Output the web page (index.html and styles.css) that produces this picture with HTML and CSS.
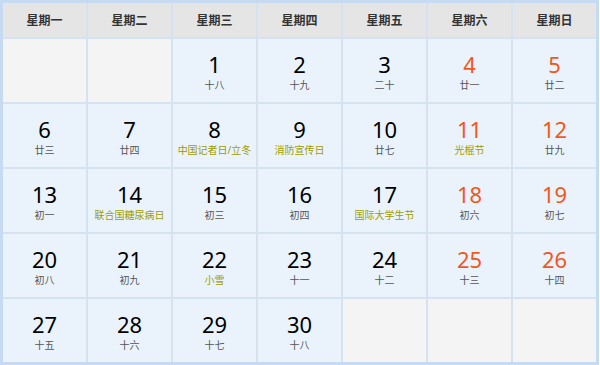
FILE: index.html
```html
<!DOCTYPE html>
<html lang="zh-CN">
<head>
<meta charset="utf-8">
<title>日历</title>
<link rel="stylesheet" href="styles.css">
</head>
<body>
<div class="cal">
  <div class="head">星期一</div>
  <div class="head">星期二</div>
  <div class="head">星期三</div>
  <div class="head">星期四</div>
  <div class="head">星期五</div>
  <div class="head">星期六</div>
  <div class="head">星期日</div>

  <div class="cell empty"></div>
  <div class="cell empty"></div>
  <div class="cell"><span class="num">1</span><span class="sub">十八</span></div>
  <div class="cell"><span class="num">2</span><span class="sub">十九</span></div>
  <div class="cell"><span class="num">3</span><span class="sub">二十</span></div>
  <div class="cell"><span class="num wk">4</span><span class="sub">廿一</span></div>
  <div class="cell"><span class="num wk">5</span><span class="sub">廿二</span></div>

  <div class="cell"><span class="num">6</span><span class="sub">廿三</span></div>
  <div class="cell"><span class="num">7</span><span class="sub">廿四</span></div>
  <div class="cell"><span class="num">8</span><span class="sub fest">中国记者日/立冬</span></div>
  <div class="cell"><span class="num">9</span><span class="sub fest">消防宣传日</span></div>
  <div class="cell"><span class="num">10</span><span class="sub">廿七</span></div>
  <div class="cell"><span class="num wk">11</span><span class="sub fest">光棍节</span></div>
  <div class="cell"><span class="num wk">12</span><span class="sub">廿九</span></div>

  <div class="cell"><span class="num">13</span><span class="sub">初一</span></div>
  <div class="cell"><span class="num">14</span><span class="sub fest">联合国糖尿病日</span></div>
  <div class="cell"><span class="num">15</span><span class="sub">初三</span></div>
  <div class="cell"><span class="num">16</span><span class="sub">初四</span></div>
  <div class="cell"><span class="num">17</span><span class="sub fest">国际大学生节</span></div>
  <div class="cell"><span class="num wk">18</span><span class="sub">初六</span></div>
  <div class="cell"><span class="num wk">19</span><span class="sub">初七</span></div>

  <div class="cell"><span class="num">20</span><span class="sub">初八</span></div>
  <div class="cell"><span class="num">21</span><span class="sub">初九</span></div>
  <div class="cell"><span class="num">22</span><span class="sub fest">小雪</span></div>
  <div class="cell"><span class="num">23</span><span class="sub">十一</span></div>
  <div class="cell"><span class="num">24</span><span class="sub">十二</span></div>
  <div class="cell"><span class="num wk">25</span><span class="sub">十三</span></div>
  <div class="cell"><span class="num wk">26</span><span class="sub">十四</span></div>

  <div class="cell"><span class="num">27</span><span class="sub">十五</span></div>
  <div class="cell"><span class="num">28</span><span class="sub">十六</span></div>
  <div class="cell"><span class="num">29</span><span class="sub">十七</span></div>
  <div class="cell"><span class="num">30</span><span class="sub">十八</span></div>
  <div class="cell empty"></div>
  <div class="cell empty"></div>
  <div class="cell empty"></div>
</div>
</body>
</html>
```

FILE: styles.css
```css
html, body {
  margin: 0;
  padding: 0;
  background: #ffffff;
}

.cal {
  width: 593px;
  display: grid;
  grid-template-columns: repeat(7, 83px);
  grid-template-rows: 34px repeat(5, 63px);
  gap: 2px;
  border: 3px solid #c6daf2;
  background: #d5e3f1;
  font-family: "Noto Sans", "Noto Sans CJK SC", sans-serif;
}

.head {
  background: #e5e5e5;
  color: #333333;
  font-size: 12px;
  font-weight: bold;
  display: flex;
  align-items: center;
  justify-content: center;
}

.cell {
  background: #eaf3fb;
  display: flex;
  flex-direction: column;
  align-items: center;
  justify-content: flex-start;
  padding-top: 13px;
  box-sizing: border-box;
}

.cell.empty {
  background: #f4f4f4;
}

.num {
  font-size: 22px;
  line-height: 24px;
  color: #000000;
}

.num.wk {
  color: #f2571c;
}

.sub {
  font-size: 10px;
  line-height: 12px;
  color: #555555;
  white-space: nowrap;
  margin-top: 3px;
}

.sub.fest {
  color: #9c9c00;
}
```
